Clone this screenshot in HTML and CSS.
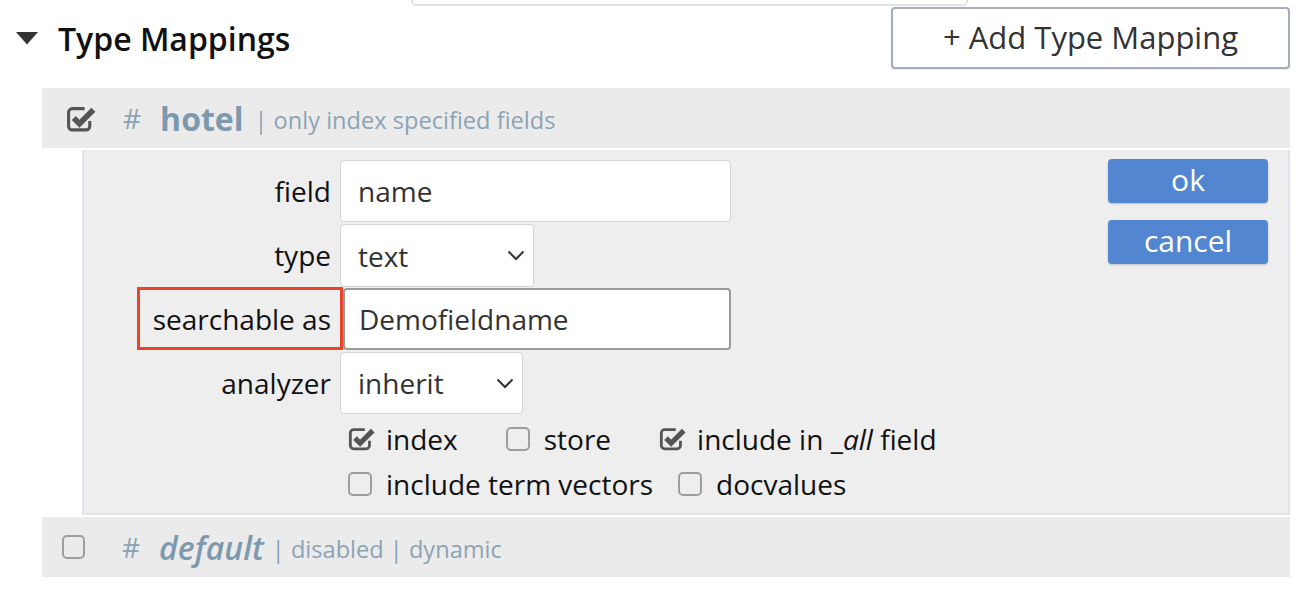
FILE: index.html
```html
<!DOCTYPE html>
<html>
<head>
<meta charset="utf-8">
<link rel="stylesheet" href="styles.css">
</head>
<body>
<div class="topbox"></div>
<div class="section-head">
  <div class="title">
    <svg class="caret" width="22" height="13" viewBox="0 0 22 13"><path d="M0 0 H22 L11 12.5 Z" fill="#333"/></svg>
    <h2>Type Mappings</h2>
  </div>
  <button class="add-btn">+ Add Type Mapping</button>
</div>

<div class="mapping-row">
  <svg class="chk-on" width="31" height="28" viewBox="0 0 30 27">
    <path d="M18 3.5 H6 a3.5 3.5 0 0 0 -3.5 3.5 v13.5 a3.5 3.5 0 0 0 3.5 3.5 h13.5 a3.5 3.5 0 0 0 3.5 -3.5 v-5" fill="none" stroke="#555" stroke-width="3"/>
    <path d="M7.5 12.5 L13 18 L26.5 4.5" fill="none" stroke="#555" stroke-width="5.5" stroke-linejoin="miter"/>
  </svg>
  <span class="hash">#</span>
  <span class="type-name">hotel</span>
  <span class="meta">| only index specified fields</span>
</div>

<div class="panel">
  <div class="form">
    <label class="lbl">field</label>
    <div class="ctl"><input class="txt wide" value="name"></div>

    <label class="lbl">type</label>
    <div class="ctl">
      <div class="sel sel-type"><span>text</span>
        <svg width="18" height="11" viewBox="0 0 18 11"><path d="M1.5 1.5 L9 9 L16.5 1.5" fill="none" stroke="#333" stroke-width="2"/></svg>
      </div>
    </div>

    <label class="lbl lbl-mark"><span class="mark">searchable as</span></label>
    <div class="ctl"><input class="txt wide focus" value="Demofieldname"></div>

    <label class="lbl">analyzer</label>
    <div class="ctl">
      <div class="sel sel-an"><span>inherit</span>
        <svg width="18" height="11" viewBox="0 0 18 11"><path d="M1.5 1.5 L9 9 L16.5 1.5" fill="none" stroke="#333" stroke-width="2"/></svg>
      </div>
    </div>

    <div></div>
    <div class="checks">
      <div class="check-line line1">
        <span class="opt">
          <svg class="cb" width="28" height="26" viewBox="0 0 30 27"><path d="M18 3.5 H6 a3.5 3.5 0 0 0 -3.5 3.5 v13.5 a3.5 3.5 0 0 0 3.5 3.5 h13.5 a3.5 3.5 0 0 0 3.5 -3.5 v-5" fill="none" stroke="#555" stroke-width="3"/><path d="M7.5 12.5 L13 18 L26.5 4.5" fill="none" stroke="#555" stroke-width="5.5"/></svg>
          index</span>
        <span class="opt"><span class="box"></span>store</span>
        <span class="opt">
          <svg class="cb" width="28" height="26" viewBox="0 0 30 27"><path d="M18 3.5 H6 a3.5 3.5 0 0 0 -3.5 3.5 v13.5 a3.5 3.5 0 0 0 3.5 3.5 h13.5 a3.5 3.5 0 0 0 3.5 -3.5 v-5" fill="none" stroke="#555" stroke-width="3"/><path d="M7.5 12.5 L13 18 L26.5 4.5" fill="none" stroke="#555" stroke-width="5.5"/></svg>
          include in&nbsp;_<i>all</i>&nbsp;field</span>
      </div>
      <div class="check-line line2">
        <span class="opt"><span class="box"></span>include term vectors</span>
        <span class="opt"><span class="box"></span>docvalues</span>
      </div>
    </div>
  </div>
  <div class="actions">
    <button class="btn-blue">ok</button>
    <button class="btn-blue">cancel</button>
  </div>
</div>

<div class="mapping-row default-row">
  <span class="box big"></span>
  <span class="hash">#</span>
  <span class="type-name ital">default</span>
  <span class="meta">| disabled | dynamic</span>
</div>
</body>
</html>
```
FILE: styles.css
```css
* { box-sizing: border-box; }
body {
  margin: 0;
  background: #fff;
  font-family: "Open Sans", "Noto Sans", sans-serif;
  color: #333;
  width: 1314px;
  height: 590px;
  overflow: hidden;
}
.topbox {
  margin-left: 411px;
  width: 557px;
  height: 6px;
  border: 2px solid #e3e3e3;
  border-top: none;
  border-radius: 0 0 5px 5px;
}
.section-head {
  display: flex;
  align-items: center;
  justify-content: space-between;
  margin-top: 1px;
  padding-left: 16px;
  padding-right: 24px;
}
.title { display: flex; align-items: center; }
.caret { margin-right: 20px; margin-top: 1px; }
.title h2 {
  margin: 0;
  font-size: 32px;
  font-weight: 600;
  color: #111;
}
.add-btn {
  width: 399px;
  height: 62px;
  background: #fff;
  border: 2px solid #a3adbb;
  border-radius: 4px;
  font-family: "Open Sans", sans-serif;
  font-size: 31px;
  color: #333;
  padding: 0 0 2px;
  box-shadow: 0 1px 1px rgba(0,0,0,0.08);
}
.mapping-row {
  display: flex;
  align-items: center;
  margin: 19px 24px 0 42px;
  height: 60px;
  background: #ebebeb;
  padding-left: 24px;
}
.chk-on { margin-right: 26px; margin-top: 1px; }
.hash {
  font-size: 28px;
  color: #8aa2b4;
  margin-right: 19px;
}
.type-name {
  font-size: 32px;
  font-weight: 700;
  color: #7c99ae;
  margin-right: 11px;
}
.type-name.ital { font-style: italic; font-weight: 600; margin-right: 8px; }
.meta {
  font-size: 23.6px;
  color: #8ca3b4;
  padding-top: 3px;
}
.panel {
  display: flex;
  margin: 2px 24px 0 82px;
  background: #eeeeee;
  border: 2px solid #dfe4eb;
  border-top: none;
  height: 365px;
}
.form {
  flex: 1;
  display: grid;
  grid-template-columns: 256px 1fr;
  grid-template-rows: 64px 64px 64px 62px auto;
  padding-top: 10px;
  align-content: start;
}
.lbl {
  display: flex;
  align-items: center;
  justify-content: flex-end;
  padding-right: 9px;
  font-size: 28px;
  color: #111;
  height: 62px;
}
.lbl-mark { padding-right: 0; }
.mark {
  position: relative;
  z-index: 2;
  display: flex;
  align-items: center;
  height: 63px;
  margin-top: -1px;
  margin-right: -3px;
  padding: 0 9px 0 13px;
  border: 3px solid #e8452b;
}
.ctl { display: flex; align-items: flex-start; }
.txt {
  height: 62px;
  border: 1px solid #d4d4d4;
  border-radius: 4px;
  background: #fff;
  font-family: "Open Sans", sans-serif;
  font-size: 28px;
  color: #333;
  padding: 0 17px;
  outline: none;
}
.wide { width: 391px; }
.txt.focus { border: 2px solid #9a9a9a; padding-left: 14px; margin-left: 3px; width: 388px; }
.sel {
  display: flex;
  align-items: center;
  justify-content: space-between;
  height: 63px;
  background: #fff;
  border: 1px solid #d4d4d4;
  border-radius: 4px;
  font-size: 28px;
  color: #333;
  padding: 0 8px 0 17px;
}
.sel-type { width: 194px; }
.sel-an { width: 183px; height: 62px; }
.checks {
  padding-left: 8px;
  padding-top: 2px;
}
.check-line {
  display: flex;
  align-items: center;
  height: 45px;
  font-size: 28px;
  color: #111;
}
.opt { display: flex; align-items: center; }
.line1 .opt { margin-right: 48px; }
.line2 .opt { margin-right: 25px; }
.cb { margin-right: 10px; flex: none; }
.box {
  display: inline-block;
  width: 24px;
  height: 24px;
  border: 2px solid #9e9e9e;
  border-radius: 5px;
  margin-right: 14px;
  flex: none;
}
.box.big { width: 23px; height: 24px; margin-right: 37px; margin-left: -4px; }
.opt i { font-style: italic; }
.actions {
  display: flex;
  flex-direction: column;
  gap: 17px;
  padding: 9px 20px 0 0;
}
.btn-blue {
  width: 160px;
  height: 44px;
  background: #5286d0;
  color: #fff;
  border: none;
  border-radius: 4px;
  font-family: "Open Sans", sans-serif;
  font-size: 30px;
  padding: 0 0 3px;
  box-shadow: 0 1px 2px rgba(0,0,0,0.2);
}
.default-row { margin-top: 2px; }
```
